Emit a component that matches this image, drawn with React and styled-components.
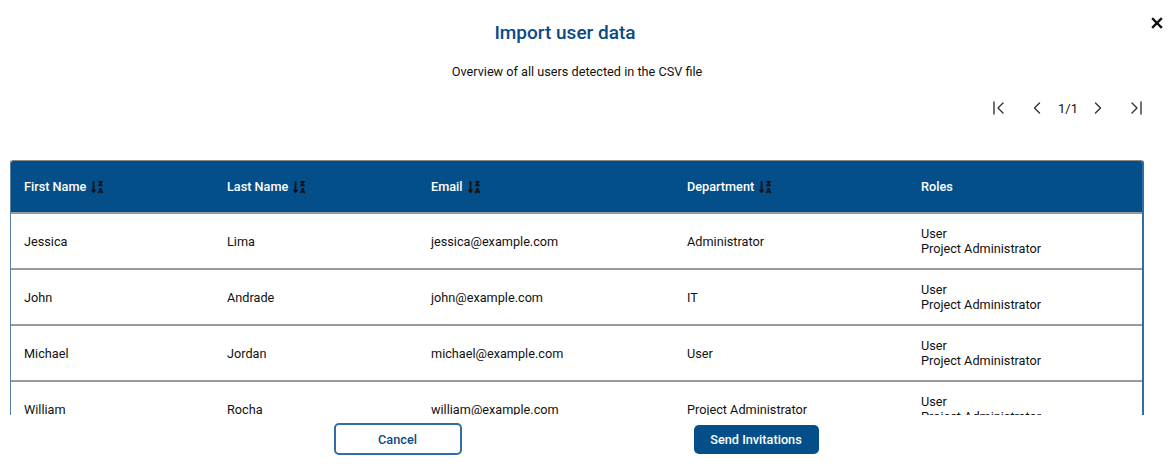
import React from "react";
import styled, { createGlobalStyle } from "styled-components";
import { FaSortAlphaDownAlt } from "react-icons/fa";

const Global = createGlobalStyle`
  html, body { margin: 0; padding: 0; background: #fff; }
  body { font-family: Roboto, "Noto Sans", "Liberation Sans", sans-serif; color: #111; }
  * { box-sizing: border-box; }
`;

const Page = styled.div`
  position: relative;
  width: 1172px;
  height: 472px;
  background: #fff;
  padding: 0 28px 0 10px;
  display: flex;
  flex-direction: column;
`;

const Close = styled.button`
  position: absolute;
  top: 14px;
  right: 6px;
  width: 18px;
  height: 18px;
  border: 0;
  background: none;
  padding: 0;
  cursor: pointer;
  display: flex;
  align-items: center;
  justify-content: center;
`;

const Title = styled.h1`
  margin: 22px 0 0 0;
  text-align: center;
  font-size: 19px;
  line-height: 22px;
  font-weight: 500;
  color: #0a4a85;
  padding-right: 24px;
`;

const Subtitle = styled.p`
  margin: 20px 0 0 0;
  text-align: center;
  font-size: 12.7px;
  line-height: 15px;
  color: #111;
`;

const Pager = styled.div`
  display: flex;
  justify-content: flex-end;
  align-items: center;
  margin-top: 17px;
  height: 24px;
`;

const PagerBtn = styled.button`
  border: 0;
  background: none;
  padding: 0;
  width: 16px;
  height: 20px;
  display: flex;
  align-items: center;
  justify-content: center;
  margin-left: ${(p) => p.$gap || 0}px;
  cursor: pointer;
`;

const PageLabel = styled.span`
  font-size: 13px;
  color: #111;
  margin: 0 12px 0 13px;
  line-height: 20px;
  padding-top: 2px;
`;

const TableWrap = styled.div`
  margin-top: 40px;
  height: 255px;
  overflow: hidden;
  border-top: 1px solid #8a8a8a;
  border-left: 1px solid #5a7fa3;
  border-right: 2px solid #2f6ea6;
  border-radius: 3px 3px 0 0;
`;

const Table = styled.table`
  width: 100%;
  border-collapse: collapse;
  table-layout: fixed;
`;

const HeadRow = styled.tr`
  background: #044f8a;
  height: 52px;
`;

const Th = styled.th`
  text-align: left;
  font-size: 12.7px;
  font-weight: 500;
  color: #fff;
  padding: 0 0 0 13px;
  width: ${(p) => p.$w}px;
  border-bottom: 2px solid #9a9a9a;
`;

const ThInner = styled.span`
  display: inline-flex;
  align-items: center;
  gap: 4px;
`;

const SortIcon = styled(FaSortAlphaDownAlt)`
  color: #111;
  width: 14px;
  height: 14px;
`;

const Row = styled.tr`
  height: 56px;
  border-bottom: 2px solid #9a9a9a;
`;

const Td = styled.td`
  font-size: 12.7px;
  line-height: 15px;
  color: #111;
  padding: 0 0 0 13px;
  vertical-align: middle;
`;

const RoleLine = styled.div`
  line-height: 15px;
`;

const Footer = styled.div`
  display: flex;
  justify-content: center;
  align-items: center;
  gap: 232px;
  margin-top: 8px;
  padding-right: 2px;
`;

const Button = styled.button`
  font-family: Roboto, "Noto Sans", "Liberation Sans", sans-serif;
  font-size: 12.7px;
  font-weight: 500;
  border-radius: 5px;
  cursor: pointer;
  height: ${(p) => (p.$primary ? 29 : 32)}px;
  width: ${(p) => (p.$primary ? 125 : 128)}px;
  background: ${(p) => (p.$primary ? "#044f8a" : "#fff")};
  color: ${(p) => (p.$primary ? "#fff" : "#0a4a85")};
  border: ${(p) => (p.$primary ? "0" : "2px solid #2f6ea6")};
`;

const cols = [
  { label: "First Name", w: 203, sort: true },
  { label: "Last Name", w: 204, sort: true },
  { label: "Email", w: 256, sort: true },
  { label: "Department", w: 234, sort: true },
  { label: "Roles", w: 237, sort: false },
];

const users = [
  ["Jessica", "Lima", "jessica@example.com", "Administrator"],
  ["John", "Andrade", "john@example.com", "IT"],
  ["Michael", "Jordan", "michael@example.com", "User"],
  ["William", "Rocha", "william@example.com", "Project Administrator"],
];

const Chevron = ({ dir, bar }) => (
  <svg width="16" height="16" viewBox="0 0 16 16" fill="none" stroke="#333" strokeWidth="1.4" strokeLinecap="round" strokeLinejoin="round">
    {dir === "left" ? (
      <>
        {bar && <line x1="3" y1="2" x2="3" y2="14" />}
        <polyline points={bar ? "12,3 7,8 12,13" : "10.5,3 5.5,8 10.5,13"} />
      </>
    ) : (
      <>
        {bar && <line x1="13" y1="2" x2="13" y2="14" />}
        <polyline points={bar ? "4,3 9,8 4,13" : "5.5,3 10.5,8 5.5,13"} />
      </>
    )}
  </svg>
);

export default function App() {
  return (
    <>
      <Global />
      <Page>
        <Close aria-label="Close">
          <svg width="12" height="12" viewBox="0 0 12 12" stroke="#111" strokeWidth="2.4" strokeLinecap="square">
            <line x1="2" y1="2" x2="10" y2="10" />
            <line x1="10" y1="2" x2="2" y2="10" />
          </svg>
        </Close>
        <Title>Import user data</Title>
        <Subtitle>Overview of all users detected in the CSV file</Subtitle>
        <Pager>
          <PagerBtn aria-label="First page"><Chevron dir="left" bar /></PagerBtn>
          <PagerBtn $gap={22} aria-label="Previous page"><Chevron dir="left" /></PagerBtn>
          <PageLabel>1/1</PageLabel>
          <PagerBtn aria-label="Next page"><Chevron dir="right" /></PagerBtn>
          <PagerBtn $gap={22} aria-label="Last page"><Chevron dir="right" bar /></PagerBtn>
        </Pager>
        <TableWrap>
          <Table>
            <thead>
              <HeadRow>
                {cols.map((c) => (
                  <Th key={c.label} $w={c.w}>
                    <ThInner>
                      {c.label}
                      {c.sort && <SortIcon />}
                    </ThInner>
                  </Th>
                ))}
              </HeadRow>
            </thead>
            <tbody>
              {users.map((u) => (
                <Row key={u[2]}>
                  {u.map((v, i) => (
                    <Td key={i}>{v}</Td>
                  ))}
                  <Td>
                    <RoleLine>User</RoleLine>
                    <RoleLine>Project Administrator</RoleLine>
                  </Td>
                </Row>
              ))}
            </tbody>
          </Table>
        </TableWrap>
        <Footer>
          <Button>Cancel</Button>
          <Button $primary>Send Invitations</Button>
        </Footer>
      </Page>
    </>
  );
}
